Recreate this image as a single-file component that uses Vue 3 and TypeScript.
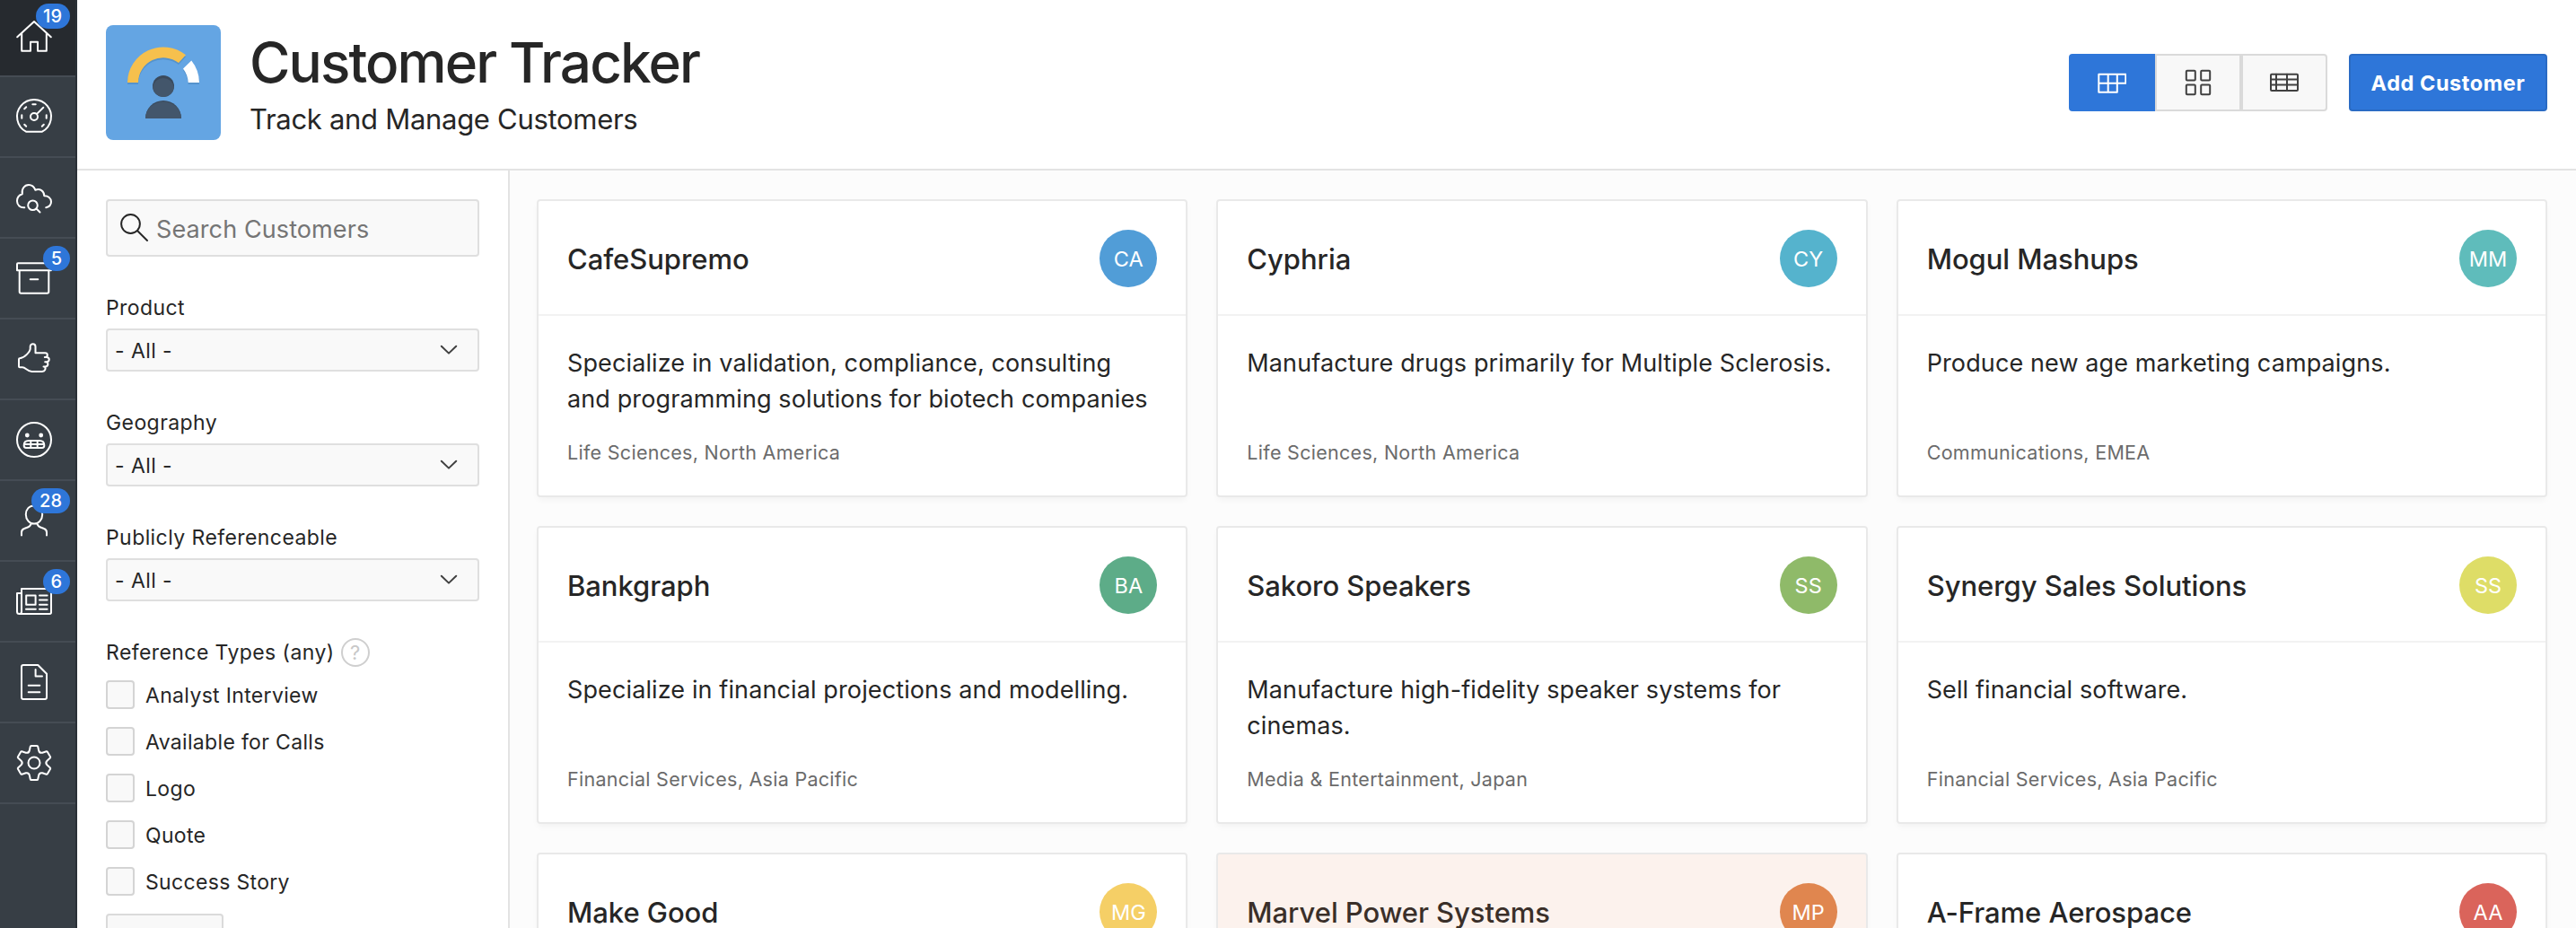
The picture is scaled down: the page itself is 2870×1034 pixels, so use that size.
<script setup lang="ts">
interface NavItem { name: string; icon: string; badge?: string; active?: boolean }
interface Customer { name: string; initials: string; color: string; text: string; meta: string; tint?: boolean }

const navItems: NavItem[] = [
  { name: 'Home', icon: 'home', badge: '19', active: true },
  { name: 'Dashboard', icon: 'gauge' },
  { name: 'Search', icon: 'cloud' },
  { name: 'Products', icon: 'archive', badge: '5' },
  { name: 'References', icon: 'thumb' },
  { name: 'Issues', icon: 'grimace' },
  { name: 'Contacts', icon: 'person', badge: '28' },
  { name: 'Updates', icon: 'news', badge: '6' },
  { name: 'Reports', icon: 'doc' },
  { name: 'Administration', icon: 'gear' },
]

const icons: Record<string, string> = {
  home: 'M1.2 21.3 20 4 38.8 21.3M6.2 17.2V36.7H16V26.7H24V36.7H33.8V17.2',
  gauge: 'M11 36.7A19 19 0 1 1 29 36.7ZM24 20a4 4 0 1 1-8 0 4 4 0 0 1 8 0ZM22.9 17.1 30.3 9.7M18.3 6.3H21.7M6.3 18.3V21.7M33.7 18.3V21.7M9.2 11.2 11.2 9.2M9.2 28.8 11.2 30.8M30.8 28.8 28.8 30.8',
  cloud: 'M9.3 31.3C4.5 31.8 1 28.3 1 24 1 20 3.5 17.2 6.8 16.2 5.8 10.5 9.2 6 14 6 17.5 6 20 8.2 21.3 11.7 26.5 9.6 31.2 12.7 31.3 18.3 35.5 18 39 20.8 39 24.8 39 28 36.8 30.5 33.2 31.2M23.8 28.7a5.3 5.3 0 1 1-10.6 0 5.3 5.3 0 0 1 10.6 0ZM22.5 32.5 26.5 36.5',
  archive: 'M1 4.3Q1 3.3 2 3.3H38Q39 3.3 39 4.3V11.3H1ZM3.7 11.3V35Q3.7 36.7 5.4 36.7H34.6Q36.3 36.7 36.3 35V11.3M15.7 21.3H24.3',
  thumb: 'M32.2 23.2H33.7C37.8 23.2 37.8 18 33.7 18H31.8M32.6 18C35.6 17.6 35.6 13.2 32.3 13.2H21.5V6.2C21.5 2.3 15.7 2.3 15.7 6.2V8.6C15.7 11.5 9.5 18.8 4 19.3Q3 19.4 3 20.3V28.3Q3 29.3 4 29.3H7C10.8 29.3 12 34 17.5 34H29C32.5 34 33.4 30.4 31.8 28.5M33 23.2C36.4 23.4 36.2 28.3 32.4 28.5H30.5',
  grimace: 'M39 20a19 19 0 1 1-38 0 19 19 0 0 1 38 0ZM8.7 26.2C8.7 22.8 11 21 14 21H26C29 21 31.3 22.8 31.3 26.2 31.3 28 30.4 29 29 29H11C9.6 29 8.7 28 8.7 26.2ZM9.2 25H30.8M16.3 21V29M23.7 21V29',
  person: 'M29.2 13.3C29.2 19 25 23.6 20 23.6S10.8 19 10.8 13.3C10.8 7.4 14.6 3.4 20 3.4S29.2 7.4 29.2 13.3ZM6 36.6V33.2C6 30.8 7.2 29.6 9 29L13.5 27.2C15.4 26.4 16.4 25.4 16.4 23M34 36.6V33.2C34 30.8 32.8 29.6 31 29L26.5 27.2C24.6 26.4 23.6 25.4 23.6 23',
  news: 'M6 31.5V6H39V32.3Q39 34 37.3 34H3.5Q1 34 1 31.5V11H6M6 11V31.5Q6 34 3.5 34M11.2 13.4H21.6V23.8H11.2ZM26 13.4H34.6M26 18.6H34.6M26 23.8H34.6M26 28.8H34.6M11 28.8H21.8',
  doc: 'M8 1H24.3L34 10.7V37Q34 39 32 39H8Q6 39 6 37V3Q6 1 8 1ZM21.6 6V13.4H29M13.7 23.7H26.3M13.7 31.3H26.3',
  gear: gearPath(),
}

/* Six-toothed cog around (20, 20) with a round hub. */
function gearPath(): string {
  const at = (x: number, y: number, deg: number): string => {
    const a = (deg * Math.PI) / 180
    const px = 20 + x * Math.cos(a) - y * Math.sin(a)
    const py = 20 + x * Math.sin(a) + y * Math.cos(a)
    return `${px.toFixed(2)} ${py.toFixed(2)}`
  }
  let d = ''
  for (let i = 0; i < 6; i++) {
    const t = i * 60
    d += `${i ? 'L' : 'M'}${at(-5.2, -13.6, t)}L${at(-4.2, -18.2, t)}Q${at(-4, -19, t)} ${at(-3.2, -19, t)}`
    d += `L${at(3.2, -19, t)}Q${at(4, -19, t)} ${at(4.2, -18.2, t)}L${at(5.2, -13.6, t)}`
    d += `Q${at(0, -12.2, t + 30)} ${at(-5.2, -13.6, t + 60)}`
  }
  return `${d}ZM26.5 20a6.5 6.5 0 1 1-13 0 6.5 6.5 0 0 1 13 0Z`
}

const filters = ['Product', 'Geography', 'Publicly Referenceable']
const referenceTypes = ['Analyst Interview', 'Available for Calls', 'Logo', 'Quote', 'Success Story']

const customers: Customer[] = [
  { name: 'CafeSupremo', initials: 'CA', color: '#519dd7', text: 'Specialize in validation, compliance, consulting and programming solutions for biotech companies', meta: 'Life Sciences, North America' },
  { name: 'Cyphria', initials: 'CY', color: '#55b3cd', text: 'Manufacture drugs primarily for Multiple Sclerosis.', meta: 'Life Sciences, North America' },
  { name: 'Mogul Mashups', initials: 'MM', color: '#5fbcbb', text: 'Produce new age marketing campaigns.', meta: 'Communications, EMEA' },
  { name: 'Bankgraph', initials: 'BA', color: '#5dac88', text: 'Specialize in financial projections and modelling.', meta: 'Financial Services, Asia Pacific' },
  { name: 'Sakoro Speakers', initials: 'SS', color: '#8fba69', text: 'Manufacture high-fidelity speaker systems for cinemas.', meta: 'Media & Entertainment, Japan' },
  { name: 'Synergy Sales Solutions', initials: 'SS', color: '#dedd67', text: 'Sell financial software.', meta: 'Financial Services, Asia Pacific' },
  { name: 'Make Good', initials: 'MG', color: '#f5cf66', text: '', meta: '' },
  { name: 'Marvel Power Systems', initials: 'MP', color: '#e0864f', text: '', meta: '', tint: true },
  { name: 'A-Frame Aerospace', initials: 'AA', color: '#da645b', text: '', meta: '' },
]
</script>

<template>
  <div class="app">
    <nav class="rail">
      <a v-for="item in navItems" :key="item.name" class="rail-item" :class="{ active: item.active }" :aria-label="item.name">
        <svg class="rail-icon" viewBox="0 0 40 40">
          <path :d="icons[item.icon]" />
          <g v-if="item.icon === 'grimace'" class="solid">
            <circle cx="12.3" cy="15" r="2.4" /><circle cx="27.7" cy="15" r="2.4" />
          </g>
        </svg>
        <span v-if="item.badge" class="badge">{{ item.badge }}</span>
      </a>
    </nav>

    <div class="page">
      <header class="header">
        <svg class="logo" viewBox="0 0 128 128">
          <rect width="128" height="128" rx="8" fill="#64a5e3" />
          <g fill="#5593cd" transform="translate(0 2)">
            <path d="M24 64A40 40 0 0 1 89 33.2L81 42A28 28 0 0 0 36 64Z" />
            <path d="M95.3 39.5A40 40 0 0 1 104 64H91.7A28 28 0 0 0 86 48.5Z" />
          </g>
          <path d="M24 64A40 40 0 0 1 89 33.2L81 42A28 28 0 0 0 36 64Z" fill="#f6c04d" />
          <path d="M95.3 39.5A40 40 0 0 1 104 64H91.7A28 28 0 0 0 86 48.5Z" fill="#fff" />
          <circle cx="64" cy="68" r="12" fill="#3a4a5c" />
          <path d="M52.1 69.5A12 12 0 0 1 75.9 69.5 12 12 0 0 1 52.1 69.5Z" fill="#43566b" />
          <path d="M44 104A20 20 0 0 1 84 104Z" fill="#3a4a5c" />
          <path d="M44 104A20 18.7 0 0 1 84 104Z" fill="#43566b" />
        </svg>
        <div class="heading">
          <h1>Customer Tracker</h1>
          <p>Track and Manage Customers</p>
        </div>
        <div class="views">
          <button class="view current" aria-label="Cards">
            <svg viewBox="0 0 32 32"><path d="M1.3 6.7H31.3V16.8H1.3M1.3 6.7V26.7H21.8V6.7M11.7 6.7V26.7" /></svg>
          </button>
          <button class="view" aria-label="Icons">
            <svg viewBox="0 0 32 32">
              <rect x="2.8" y="2.8" width="10" height="10.6" rx="1" /><rect x="19.2" y="2.8" width="10" height="10.6" rx="1" />
              <rect x="2.8" y="18.6" width="10" height="10.6" rx="1" /><rect x="19.2" y="18.6" width="10" height="10.6" rx="1" />
            </svg>
          </button>
          <button class="view" aria-label="Report">
            <svg viewBox="0 0 32 32"><rect x="1" y="6.7" width="30" height="18.4" rx="1" /><path d="M1 12.6H31M1 18.6H31M7 6.7V25M19 6.7V25" /></svg>
          </button>
        </div>
        <button class="add">Add Customer</button>
      </header>

      <div class="body">
        <aside class="filters">
          <div class="search">
            <svg viewBox="0 0 32 32"><circle cx="11.5" cy="11.5" r="10.4" /><path d="M19 19 30 30" /></svg>
            <span>Search Customers</span>
          </div>
          <div v-for="name in filters" :key="name" class="field">
            <div class="label">{{ name }}</div>
            <div class="select">
              <span>- All -</span>
              <svg viewBox="0 0 20 12"><path d="M1.8 1.8 10 9.6 18.2 1.8" /></svg>
            </div>
          </div>
          <div class="field">
            <div class="label">Reference Types (any)<span class="help">?</span></div>
            <div class="checks">
              <label v-for="type in referenceTypes" :key="type" class="check"><i class="box"></i><span>{{ type }}</span></label>
            </div>
            <button class="small">Check all</button>
          </div>
        </aside>

        <main class="cards">
          <article v-for="c in customers" :key="c.name" class="card" :class="{ tint: c.tint }">
            <div class="card-head">
              <h3>{{ c.name }}</h3>
              <span class="avatar" :style="{ background: c.color }">{{ c.initials }}</span>
            </div>
            <div v-if="c.text" class="card-body">
              <p class="desc">{{ c.text }}</p>
              <p class="meta">{{ c.meta }}</p>
            </div>
          </article>
        </main>
      </div>
    </div>
  </div>
</template>

<style>
html, body { overflow: hidden; }
</style>

<style scoped>
* { box-sizing: border-box; }
h1, h3, p { margin: 0; }
button { font-family: inherit; padding: 0; }
.app {
  display: flex; width: 2870px; height: 1034px; overflow: hidden;
  background: #fff; color: #262626; font-family: Inter, "Liberation Sans", sans-serif;
}
svg { fill: none; stroke-linecap: round; stroke-linejoin: round; flex: none; }

.rail { width: 86px; flex: none; background: #373e45; border-right: 2px solid #2a3037; margin-top: -4px; }
.rail-item { position: relative; display: flex; align-items: center; height: 90px; padding-left: 18px; border-bottom: 2px solid #454c54; }
.rail-item.active { background: #262a2f; }
.rail-icon { width: 40px; height: 40px; stroke: #fff; stroke-width: 2; overflow: visible; }
.rail-icon .solid { fill: #fff; stroke: none; }
.badge {
  position: absolute; top: 8px; right: 6px; height: 28px; min-width: 29px; padding: 0 8.5px; border-radius: 14px;
  background: #2e76d9; color: #fff; font-size: 20px; line-height: 28px; font-weight: 500; text-align: center; letter-spacing: .3px;
}

.page { flex: 1; display: flex; flex-direction: column; min-width: 0; }
.header { display: flex; flex: none; height: 190px; padding: 28px 32px 0; border-bottom: 2px solid #e3e3e3; }
.logo { width: 128px; height: 128px; stroke: none; }
.heading { margin: 4px auto 0 32px; }
h1 { font-size: 62px; line-height: 76px; font-weight: 500; letter-spacing: -1.9px; }
.heading p { margin-top: 5px; font-size: 31px; line-height: 40px; letter-spacing: -.3px; }
.views { display: flex; margin: 32px 24px 0 0; height: 64px; }
.view {
  display: flex; align-items: center; justify-content: center; width: 96px; height: 64px;
  background: #f8f8f8; border: 2px solid #dadada; stroke: #404040; stroke-width: 2;
}
.view:last-child { border-radius: 0 4px 4px 0; }
.view svg { width: 32px; height: 32px; }
.view.current { background: #2e76d9; border-color: #2e76d9; border-radius: 4px 0 0 4px; stroke: #fff; }
.add {
  margin-top: 32px; padding-top: 1px; width: 221px; height: 64px; border: 2px solid #2a6bc4; border-radius: 4px;
  background: #2e76d9; color: #fff; font-size: 23.5px; font-weight: 700; letter-spacing: .55px;
}

.body { display: flex; flex: 1; min-height: 0; }
.filters { width: 482px; flex: none; padding: 32px 32px 0; border-right: 2px solid #e3e3e3; font-size: 23px; letter-spacing: .42px; }
.search {
  display: flex; align-items: center; height: 64px; padding-left: 14px; border: 2px solid #dfdfdf; border-radius: 4px;
  background: #f9f9f9; color: #757575; font-size: 27px; letter-spacing: .1px;
}
.search svg { width: 32px; height: 32px; stroke: #262626; stroke-width: 2; margin-right: 8px; }
.search span { padding-top: 3px; }
.field { padding-top: 41px; }
.label { display: flex; align-items: center; height: 32px; margin-bottom: 7px; }
.select {
  display: flex; align-items: center; justify-content: space-between; height: 48px; padding: 0 22px 0 8px;
  border: 2px solid #dfdfdf; border-radius: 4px; background: #f9f9f9;
}
.select span, .check span { padding-top: 2px; }
.select svg { width: 20px; height: 12px; stroke: #404040; stroke-width: 2; }
.help {
  width: 32px; height: 32px; margin-left: 7px; border: 2px solid #cfcfcf; border-radius: 50%;
  color: #c8c8c8; font-size: 22px; line-height: 28px; text-align: center; letter-spacing: 0;
}
.checks { display: flex; flex-direction: column; gap: 20px; margin: 15px 0 20px; }
.check { display: flex; align-items: center; gap: 12px; height: 32px; letter-spacing: .33px; }
.box { width: 32px; height: 32px; border: 2px solid #d4d4d4; border-radius: 4px; background: #f9f9f9; }
.small { width: 131px; height: 48px; border: 2px solid #dadada; border-radius: 4px; background: #f8f8f8; color: #404040; font-size: 22px; }

.cards {
  flex: 1; display: grid; grid-template-columns: repeat(3, 1fr); grid-auto-rows: 332px; gap: 32px;
  padding: 32px 32px 0 30px; background: #fcfcfc;
}
.card { border: 2px solid #e9e9e9; border-radius: 4px; background: #fff; box-shadow: 0 4px 8px -2px rgba(0, 0, 0, .05); }
.card-head { display: flex; align-items: center; justify-content: space-between; height: 128px; padding: 2px 32px 0; border-bottom: 2px solid #f2f2f2; }
h3 { padding-top: 2px; font-size: 31px; line-height: 40px; font-weight: 500; letter-spacing: -.05px; }
.avatar { width: 64px; height: 64px; border-radius: 50%; color: #fff; font-size: 23.5px; line-height: 65px; text-align: center; }
.card-body { padding: 33px 32px 0; }
.desc { height: 80px; font-size: 27px; line-height: 40px; letter-spacing: .115px; }
.meta { margin-top: 23px; font-size: 21.5px; line-height: 32px; letter-spacing: .29px; color: #6b6b6b; }
.card.tint { background: #fcf2ed; }
.card.tint h3 { color: #3a2f29; }
</style>
